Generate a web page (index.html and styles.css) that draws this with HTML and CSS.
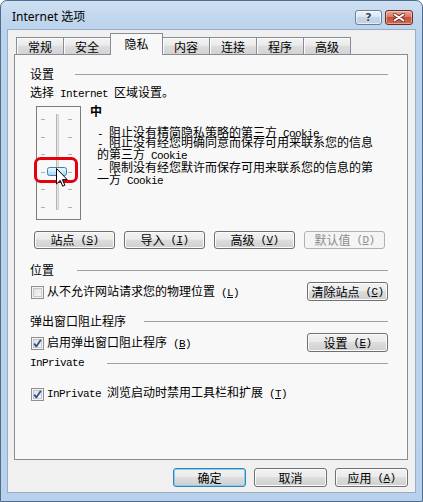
FILE: index.html
```html
<!DOCTYPE html>
<html lang="zh-CN">
<head>
<meta charset="utf-8">
<title>Internet 选项</title>
<link rel="stylesheet" href="styles.css">
</head>
<body>
<div class="window">
  <div class="titlebar">
    <span class="title">Internet 选项</span>
    <div class="caption">
      <div class="cap-btn help"><span>?</span></div>
      <div class="cap-btn close">
        <svg width="12" height="9" viewBox="0 0 12 9">
          <path d="M1.5 1.5L10.5 7.5M10.5 1.5L1.5 7.5" stroke="#6e2a22" stroke-width="3.6" stroke-linecap="round"/>
          <path d="M1.5 1.5L10.5 7.5M10.5 1.5L1.5 7.5" stroke="#ffffff" stroke-width="2" stroke-linecap="round"/>
        </svg>
      </div>
    </div>
  </div>
  <div class="client">
    <div class="tabs">
      <div class="tab">常规</div>
      <div class="tab">安全</div>
      <div class="tab active">隐私</div>
      <div class="tab">内容</div>
      <div class="tab">连接</div>
      <div class="tab">程序</div>
      <div class="tab">高级</div>
    </div>
    <div class="panel">
      <div class="group-head g-settings"><span>设置</span><i class="rule"></i></div>
      <div class="intro">选择<span class="en"> Internet </span>区域设置。</div>
      <div class="slider-row">
        <svg class="slider" width="45" height="114" viewBox="0 0 45 114">
          <defs>
            <linearGradient id="thumb" x1="0" y1="0" x2="0" y2="1">
              <stop offset="0" stop-color="#eaf6fd"/>
              <stop offset="0.5" stop-color="#d3ecfa"/>
              <stop offset="0.55" stop-color="#bde2f7"/>
              <stop offset="1" stop-color="#a7d7f3"/>
            </linearGradient>
          </defs>
          <rect x="0.5" y="0.5" width="44" height="113" fill="none" stroke="#000" stroke-dasharray="1 1"/>
          <rect x="20" y="8" width="3" height="96" fill="#e4e4e4"/>
          <path d="M20.5 8V104" stroke="#b4b4b4"/>
          <path d="M22.5 8V104" stroke="#d2d2d2"/>
          <path d="M5 13.5h4M32 13.5h4M5 31.5h4M32 31.5h4M5 48.5h4M32 48.5h4M5 66.5h4M32 66.5h4M5 83.5h4M32 83.5h4M5 101.5h4M32 101.5h4" stroke="#b0b0b0"/>
          <rect x="11.5" y="61.5" width="19" height="8" rx="2" fill="url(#thumb)" stroke="#3c7fb1"/>
          <rect x="-0.5" y="52.5" width="41" height="23" rx="5" fill="none" stroke="#e3000f" stroke-width="3"/>
          <path transform="translate(20 62)" d="M0.5 0.5V16L4.2 12.4L6.7 18.2L8.9 17.2L6.4 11.6H11.2Z" fill="#ffffff" stroke="#000" stroke-linejoin="round"/>
        </svg>
        <div class="level">
          <div class="level-name">中</div>
          <div class="desc">
            <div class="dl first"><span class="en">- </span>阻止没有精简隐私策略的第三方<span class="en"> Cookie</span></div>
            <div class="dl"><span class="en">- </span>阻止没有经您明确同意而保存可用来联系您的信息</div>
            <div class="dl">的第三方<span class="en"> Cookie</span></div>
            <div class="dl"><span class="en">- </span>限制没有经您默许而保存可用来联系您的信息的第</div>
            <div class="dl">一方<span class="en"> Cookie</span></div>
          </div>
        </div>
      </div>
      <div class="btn-row">
        <div class="btn w81">站点<span class="en"> (<u>S</u>)</span></div>
        <div class="btn w81">导入<span class="en"> (<u>I</u>)</span></div>
        <div class="btn w81">高级<span class="en"> (<u>V</u>)</span></div>
        <div class="btn w81 disabled">默认值<span class="en"> (<u>D</u>)</span></div>
      </div>

      <div class="group-head g-location"><span>位置</span><i class="rule"></i></div>
      <div class="option-row r-location">
        <span class="cb"></span>
        <span class="opt-label">从不允许网站请求您的物理位置<span class="en"> (<u>L</u>)</span></span>
        <div class="btn w81 push">清除站点<span class="en"> (<u>C</u>)</span></div>
      </div>

      <div class="group-head g-popup"><span>弹出窗口阻止程序</span><i class="rule"></i></div>
      <div class="option-row r-popup">
        <span class="cb checked"><svg width="11" height="11" viewBox="0 0 11 11"><path d="M2.2 5.6L4.3 8.4L8.9 1.8" fill="none" stroke="#34508f" stroke-width="1.8" stroke-linejoin="round"/></svg></span>
        <span class="opt-label">启用弹出窗口阻止程序<span class="en"> (<u>B</u>)</span></span>
        <div class="btn w81 push">设置<span class="en"> (<u>E</u>)</span></div>
      </div>

      <div class="group-head g-inprivate"><span class="en">InPrivate</span><i class="rule"></i></div>
      <div class="option-row r-inprivate">
        <span class="cb checked"><svg width="11" height="11" viewBox="0 0 11 11"><path d="M2.2 5.6L4.3 8.4L8.9 1.8" fill="none" stroke="#34508f" stroke-width="1.8" stroke-linejoin="round"/></svg></span>
        <span class="opt-label"><span class="en">InPrivate </span>浏览启动时禁用工具栏和扩展<span class="en"> (<u>T</u>)</span></span>
      </div>
    </div>
    <div class="footer">
      <div class="btn w73 default">确定</div>
      <div class="btn w73">取消</div>
      <div class="btn w73">应用<span class="en"> (<u>A</u>)</span></div>
    </div>
  </div>
</div>
</body>
</html>
```
FILE: styles.css
```css
* { box-sizing: border-box; margin: 0; padding: 0; }
html, body { width: 423px; height: 502px; overflow: hidden; }
body {
  background: #ffffff;
  font-family: "Noto Sans CJK SC", "Noto Sans", sans-serif;
  font-size: 12px;
  color: #000;
}
.en {
  font-family: "Liberation Mono", "DejaVu Sans Mono", monospace;
  font-size: 11px;
  letter-spacing: -0.6px;
  white-space: pre;
}
u { text-decoration: underline; text-underline-offset: 1px; }

.window {
  width: 423px;
  height: 502px;
  border: 1px solid #4f6d8d;
  border-radius: 7px 7px 0 0;
  background: linear-gradient(180deg, #cfe0f2 0px, #c0d6ed 18px, #bad2eb 40px, #b9d1ea 100%);
  display: flex;
  flex-direction: column;
  padding: 0 7px 9px 7px;
}
.titlebar {
  height: 29px;
  display: flex;
  align-items: center;
  padding: 3px 2px 0 4px;
}
.title {
  font-family: "Noto Sans", "Noto Sans CJK SC", sans-serif;
  font-size: 12px;
  line-height: 14px;
  color: #000;
  flex: 1;
}
.caption { display: flex; gap: 3px; }
.cap-btn {
  height: 15px;
  border-radius: 3px;
  display: flex;
  align-items: center;
  justify-content: center;
}
.help {
  width: 27px;
  border: 1px solid #6a7f98;
  background: linear-gradient(180deg, #eef3f9 0%, #dbe6f2 45%, #c6d6e8 50%, #bdd0e5 100%);
  box-shadow: inset 0 0 0 1px rgba(255,255,255,0.6);
}
.help span {
  font-family: "DejaVu Sans", sans-serif;
  font-weight: bold;
  font-size: 11px;
  line-height: 11px;
  color: #34475f;
  text-shadow: 0 0 2px #fff;
}
.close {
  width: 28px;
  border: 1px solid #6b2c25;
  background: linear-gradient(180deg, #e8a899 0%, #d67b67 45%, #c4503b 50%, #cf6a4f 100%);
  box-shadow: inset 0 0 0 1px rgba(255,220,210,0.5);
}

.client {
  flex: 1;
  background: #f0f0f0;
  padding: 3px 7px 0 6px;
  box-shadow: 0 0 0 1px #97adc6;
  display: flex;
  flex-direction: column;
}

.tabs {
  height: 21px;
  display: flex;
  align-items: flex-end;
  padding-left: 2px;
}
.tab {
  position: relative;
  width: 48px;
  height: 17px;
  margin-left: -1px;
  border: 1px solid #898c95;
  border-bottom: none;
  background: linear-gradient(180deg, #f3f3f3 0%, #ebebeb 45%, #dddddd 50%, #d3d3d3 100%);
  box-shadow: inset 1px 1px 0 #fcfcfc;
  text-align: center;
  line-height: 16px;
  padding-top: 1px;
}
.tab:first-child { margin-left: 0; }
.tab.active {
  width: 53px;
  height: 22px;
  margin-bottom: -1px;
  background: #f8f8f8;
  box-shadow: none;
  z-index: 1;
  line-height: 18px;
  padding-top: 1px;
}

.panel {
  height: 406px;
  border: 1px solid #898c95;
  background: #f8f8f8;
  padding: 12px 19px 0 15px;
  display: flex;
  flex-direction: column;
}

.group-head {
  height: 14px;
  line-height: 14px;
  display: flex;
  align-items: center;
  white-space: nowrap;
}
.rule { flex: 1; height: 1px; background: #a0a0a0; }
.g-settings .rule { margin-left: 21px; }
.g-location { margin-top: 14px; }
.g-location .rule { margin-left: 23px; }
.g-popup { margin-top: 13px; }
.g-popup .rule { margin-left: 18px; }
.g-inprivate { margin-top: 4px; }
.g-inprivate .rule { margin-left: 23px; }

.intro { margin-top: 4px; height: 14px; line-height: 14px; white-space: nowrap; }

.slider-row { margin-top: 7px; display: flex; align-items: flex-start; }
.slider { margin-left: 6px; overflow: visible; flex: none; display: block; }
.level { margin-left: 9px; margin-top: -2px; white-space: nowrap; }
.level-name { font-weight: bold; line-height: 14px; height: 14px; }
.desc { margin-top: 8px; padding-left: 7px; }
.dl { line-height: 12.5px; height: 12.5px; }
.dl.first { margin-bottom: -3px; }

.btn {
  height: 18px;
  border: 1px solid #707070;
  border-radius: 3px;
  background: linear-gradient(180deg, #f2f2f2 0%, #ebebeb 45%, #dddddd 50%, #cfcfcf 100%);
  box-shadow: inset 0 0 0 1px #fbfbfb;
  display: flex;
  align-items: center;
  justify-content: center;
  line-height: 14px;
  white-space: nowrap;
  flex: none;
}
.w81 { width: 81px; }
.w73 { width: 73px; height: 19px; }
.btn.disabled {
  border-color: #adb2b5;
  background: #f4f4f4;
  box-shadow: none;
  color: #8d8d8d;
}
.btn.default {
  border-color: #3c7fb1;
  box-shadow: inset 0 0 0 1px #7dd3f7;
}
.btn-row { margin-top: 11px; margin-left: 4px; display: flex; gap: 9px; }

.option-row { display: flex; align-items: center; white-space: nowrap; }
.r-location { margin-top: 5px; height: 19px; }
.r-popup { margin-top: 5px; height: 19px; }
.r-inprivate { margin-top: 16px; height: 14px; }
.option-row .btn { height: 19px; }
.push { margin-left: auto; }

.cb {
  width: 13px;
  height: 13px;
  margin-left: 1px;
  margin-top: 2px;
  border: 1px solid #8e8f8f;
  background: linear-gradient(135deg, #d8dade 0%, #f3f3f3 70%, #fbfbfb 100%);
  box-shadow: inset 0 0 0 1px #f4f4f4, inset 0 0 0 2px #c4c8cc;
  display: flex;
  align-items: center;
  justify-content: center;
  flex: none;
}
.opt-label { margin-left: 3px; line-height: 14px; }

.footer {
  margin-top: 8px;
  display: flex;
  justify-content: flex-end;
  gap: 8px;
}
```
